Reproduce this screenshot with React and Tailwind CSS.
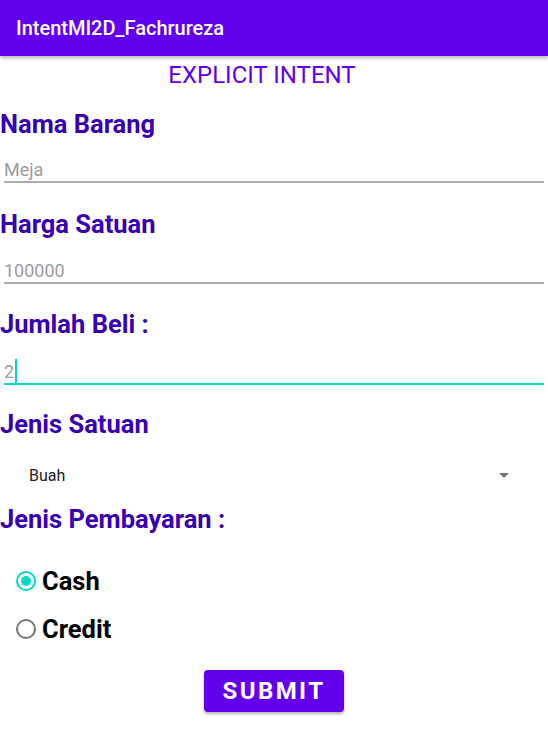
import React from "react";

const font = { fontFamily: "Roboto, 'Noto Sans', sans-serif" };

function Label({ children, className = "" }) {
  return (
    <div className={"text-[25.5px] leading-[30px] font-bold text-[#3700B3] h-[30px] " + className}>
      {children}
    </div>
  );
}

function Field({ value, focused, className = "" }) {
  return (
    <div className={"mx-[4px] " + className}>
      <div className="flex items-center h-[22px] text-[18px] leading-[21px] text-[#9c9c9c]">
        <span>{value}</span>
        {focused && <span className="w-[2px] h-[24px] bg-[#03DAC5] ml-[1px]" />}
      </div>
      <div className={"h-[2px] mt-[1px] " + (focused ? "bg-[#03DAC5]" : "bg-[#adadad]")} />
    </div>
  );
}

function Radio({ checked, label, className = "" }) {
  return (
    <div className={"flex items-center h-[30px] " + className}>
      <div
        className={
          "ml-[16px] w-[20px] h-[20px] rounded-full border-2 flex items-center justify-center " +
          (checked ? "border-[#03DAC5]" : "border-[#757575]")
        }
      >
        {checked && <div className="w-[10px] h-[10px] rounded-full bg-[#03DAC5]" />}
      </div>
      <span className="ml-[6px] text-[25.5px] leading-[30px] font-bold text-black">{label}</span>
    </div>
  );
}

export default function App() {
  return (
    <div className="w-[548px] h-[747px] bg-white overflow-hidden" style={font}>
      <div className="h-[56px] bg-[#6200EE] flex items-center pl-[16px] shadow-[0_2px_4px_rgba(0,0,0,0.3)] relative z-10">
        <span className="text-white text-[20px] font-medium leading-[24px]">IntentMI2D_Fachrureza</span>
      </div>
      <div className="mt-[5px] h-[28px] text-center pr-[24px] text-[24px] leading-[28px] text-[#6200EE]">
        EXPLICIT INTENT
      </div>
      <Label className="mt-[20px]">Nama Barang</Label>
      <Field value="Meja" className="mt-[19px]" />
      <Label className="mt-[26px]">Harga Satuan</Label>
      <Field value="100000" className="mt-[20px]" />
      <Label className="mt-[25px]">Jumlah Beli :</Label>
      <Field value="2" focused className="mt-[21px]" />
      <Label className="mt-[24px]">Jenis Satuan</Label>
      <div className="mt-[24px] h-[24px] flex items-center justify-between pl-[29px] pr-[39px]">
        <span className="text-[16px] leading-[19px] text-[#212121]">Buah</span>
        <svg width="10" height="5" viewBox="0 0 10 5">
          <path d="M0 0 L10 0 L5 5 Z" fill="#757575" />
        </svg>
      </div>
      <Label className="mt-[17px]">Jenis Pembayaran :</Label>
      <Radio checked label="Cash" className="mt-[32px]" />
      <Radio label="Credit" className="mt-[18px]" />
      <div className="flex justify-center mt-[26px]">
        <button className="w-[140px] h-[42px] rounded-[4px] bg-[#6200EE] text-white text-[24px] font-bold tracking-[0.1em] shadow-[0_2px_3px_rgba(0,0,0,0.3)]">
          SUBMIT
        </button>
      </div>
    </div>
  );
}
